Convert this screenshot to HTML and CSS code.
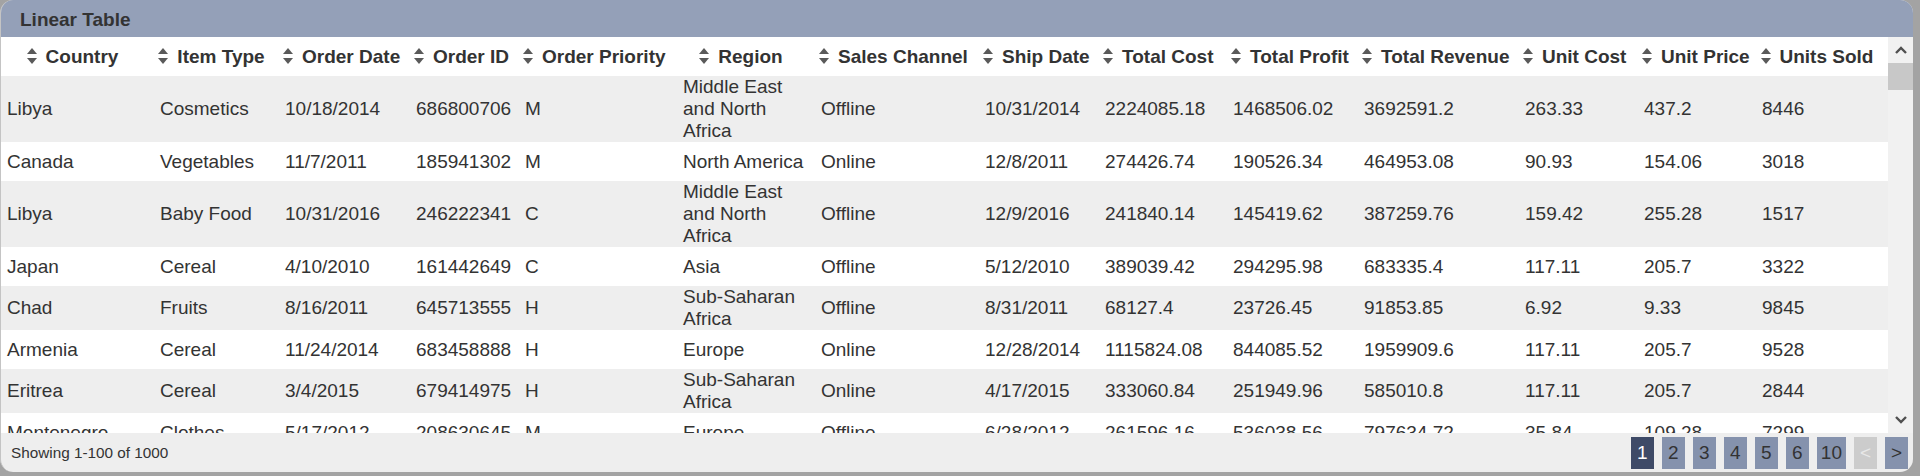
FILE: index.html
```html
<!DOCTYPE html>
<html lang="en">
<head>
    <meta charset="UTF-8">
    <meta name="viewport" content="width=device-width, initial-scale=1.0">
    <title>Linear Table</title>
    <link rel="stylesheet" href="styles.css">
</head>
<body>
    <div class="panel">
        <div class="panel-title">Linear Table</div>

        <div class="panel-body">
            <div class="table-wrap">
                <table class="grid">
                    <colgroup>
                        <col style="width: 153px">
                        <col style="width: 125px">
                        <col style="width: 131px">
                        <col style="width: 109px">
                        <col style="width: 158px">
                        <col style="width: 138px">
                        <col style="width: 164px">
                        <col style="width: 120px">
                        <col style="width: 128px">
                        <col style="width: 131px">
                        <col style="width: 161px">
                        <col style="width: 119px">
                        <col style="width: 118px">
                        <col style="width: 132px">
                    </colgroup>
                    <thead>
                        <tr>
                            <th><span class="sort"></span>Country</th>
                            <th><span class="sort"></span>Item Type</th>
                            <th><span class="sort"></span>Order Date</th>
                            <th><span class="sort"></span>Order ID</th>
                            <th><span class="sort"></span>Order Priority</th>
                            <th><span class="sort"></span>Region</th>
                            <th><span class="sort"></span>Sales Channel</th>
                            <th><span class="sort"></span>Ship Date</th>
                            <th><span class="sort"></span>Total Cost</th>
                            <th><span class="sort"></span>Total Profit</th>
                            <th><span class="sort"></span>Total Revenue</th>
                            <th><span class="sort"></span>Unit Cost</th>
                            <th><span class="sort"></span>Unit Price</th>
                            <th><span class="sort"></span>Units Sold</th>
                        </tr>
                    </thead>
                    <tbody>
                        <tr>
                            <td>Libya</td><td>Cosmetics</td><td>10/18/2014</td><td>686800706</td><td>M</td>
                            <td>Middle East and North Africa</td><td>Offline</td><td>10/31/2014</td>
                            <td>2224085.18</td><td>1468506.02</td><td>3692591.2</td><td>263.33</td><td>437.2</td><td>8446</td>
                        </tr>
                        <tr>
                            <td>Canada</td><td>Vegetables</td><td>11/7/2011</td><td>185941302</td><td>M</td>
                            <td>North America</td><td>Online</td><td>12/8/2011</td>
                            <td>274426.74</td><td>190526.34</td><td>464953.08</td><td>90.93</td><td>154.06</td><td>3018</td>
                        </tr>
                        <tr>
                            <td>Libya</td><td>Baby Food</td><td>10/31/2016</td><td>246222341</td><td>C</td>
                            <td>Middle East and North Africa</td><td>Offline</td><td>12/9/2016</td>
                            <td>241840.14</td><td>145419.62</td><td>387259.76</td><td>159.42</td><td>255.28</td><td>1517</td>
                        </tr>
                        <tr>
                            <td>Japan</td><td>Cereal</td><td>4/10/2010</td><td>161442649</td><td>C</td>
                            <td>Asia</td><td>Offline</td><td>5/12/2010</td>
                            <td>389039.42</td><td>294295.98</td><td>683335.4</td><td>117.11</td><td>205.7</td><td>3322</td>
                        </tr>
                        <tr>
                            <td>Chad</td><td>Fruits</td><td>8/16/2011</td><td>645713555</td><td>H</td>
                            <td>Sub-Saharan Africa</td><td>Offline</td><td>8/31/2011</td>
                            <td>68127.4</td><td>23726.45</td><td>91853.85</td><td>6.92</td><td>9.33</td><td>9845</td>
                        </tr>
                        <tr>
                            <td>Armenia</td><td>Cereal</td><td>11/24/2014</td><td>683458888</td><td>H</td>
                            <td>Europe</td><td>Online</td><td>12/28/2014</td>
                            <td>1115824.08</td><td>844085.52</td><td>1959909.6</td><td>117.11</td><td>205.7</td><td>9528</td>
                        </tr>
                        <tr>
                            <td>Eritrea</td><td>Cereal</td><td>3/4/2015</td><td>679414975</td><td>H</td>
                            <td>Sub-Saharan Africa</td><td>Online</td><td>4/17/2015</td>
                            <td>333060.84</td><td>251949.96</td><td>585010.8</td><td>117.11</td><td>205.7</td><td>2844</td>
                        </tr>
                        <tr>
                            <td>Montenegro</td><td>Clothes</td><td>5/17/2012</td><td>208630645</td><td>M</td>
                            <td>Europe</td><td>Offline</td><td>6/28/2012</td>
                            <td>261596.16</td><td>536038.56</td><td>797634.72</td><td>35.84</td><td>109.28</td><td>7299</td>
                        </tr>
                    </tbody>
                </table>
            </div>

            <!-- fake scrollbar so the picture does not depend on the browser -->
            <div class="scrollbar">
                <div class="sb-btn">
                    <svg width="12" height="8" viewBox="0 0 12 8"><path d="M1 7 L6 2 L11 7" fill="none" stroke="#505050" stroke-width="2.4"/></svg>
                </div>
                <div class="sb-track"><div class="sb-thumb"></div></div>
                <div class="sb-btn">
                    <svg width="12" height="8" viewBox="0 0 12 8"><path d="M1 1 L6 6 L11 1" fill="none" stroke="#505050" stroke-width="2.4"/></svg>
                </div>
            </div>
        </div>

        <div class="panel-footer">
            <span class="showing">Showing 1-100 of 1000</span>
            <div class="pager">
                <button class="page active">1</button>
                <button class="page">2</button>
                <button class="page">3</button>
                <button class="page">4</button>
                <button class="page">5</button>
                <button class="page">6</button>
                <button class="page">10</button>
                <button class="page disabled">&lt;</button>
                <button class="page">&gt;</button>
            </div>
        </div>
    </div>
</body>
</html>
```

FILE: styles.css
```css
:root {
    --title-bg: #94a0b8;
    --page-bg: #8592ad;
    --page-active: #3e4a67;
    --text: #333333;
    --stripe: #eeeeee;
}

* {
    margin: 0;
    padding: 0;
    box-sizing: border-box;
    font-family: 'Liberation Sans', Arial, sans-serif;
}

body {
    background: #a3a3a3;
    height: 476px;
    overflow: hidden;
}

.panel {
    width: 1913px;
    height: 472px;
    background: var(--stripe);
    border-left: 1px solid #c4c4c4;
    border-radius: 13px;
    overflow: hidden;
    display: flex;
    flex-direction: column;
    color: var(--text);
}

.panel-title {
    height: 37px;
    flex: none;
    background: var(--title-bg);
    padding: 2px 0 0 19px;
    font-size: 19px;
    font-weight: 700;
    line-height: 35px;
}

.panel-body {
    height: 396px;
    flex: none;
    display: flex;
}

.table-wrap {
    flex: 1;
    overflow: hidden;
}

.grid {
    width: 1887px;
    table-layout: fixed;
    border-collapse: collapse;
    font-size: 19px;
    line-height: 22px;
}

.grid th {
    height: 39px;
    padding: 1px 14px 0 4px;
    background: #ffffff;
    font-weight: 700;
    text-align: center;
    white-space: nowrap;
}

.grid td {
    height: 39px;
    padding: 0 6px;
    vertical-align: middle;
}

.grid tbody tr:nth-child(odd) {
    background: var(--stripe);
}

.grid tbody tr:nth-child(even) {
    background: #ffffff;
}

/* up / down sort arrows */
.sort {
    display: inline-flex;
    flex-direction: column;
    gap: 4px;
    margin-right: 9px;
    vertical-align: middle;
    position: relative;
    top: -2px;
}

.sort::before,
.sort::after {
    content: '';
    width: 0;
    height: 0;
    border-left: 5px solid transparent;
    border-right: 5px solid transparent;
}

.sort::before {
    border-bottom: 6px solid #5a5a5a;
}

.sort::after {
    border-top: 6px solid #5a5a5a;
}

.scrollbar {
    width: 25px;
    flex: none;
    background: #f1f1f1;
    display: flex;
    flex-direction: column;
}

.sb-btn {
    height: 26px;
    flex: none;
    display: flex;
    align-items: center;
    justify-content: center;
}

.sb-track {
    flex: 1;
}

.sb-thumb {
    height: 27px;
    background: #c8c8c8;
}

.panel-footer {
    flex: 1;
    display: flex;
    align-items: center;
    justify-content: space-between;
    padding: 0 5px 0 10px;
}

.showing {
    font-size: 15.3px;
}

.pager {
    display: flex;
    gap: 8px;
}

.page {
    min-width: 23px;
    height: 32px;
    padding: 0 4px;
    border: none;
    background: var(--page-bg);
    color: var(--text);
    font-size: 19px;
    cursor: pointer;
}

.page.active {
    background: var(--page-active);
    color: #ffffff;
}

.page.disabled {
    background: #cccccc;
    color: #e8e8e8;
    cursor: default;
}
```
